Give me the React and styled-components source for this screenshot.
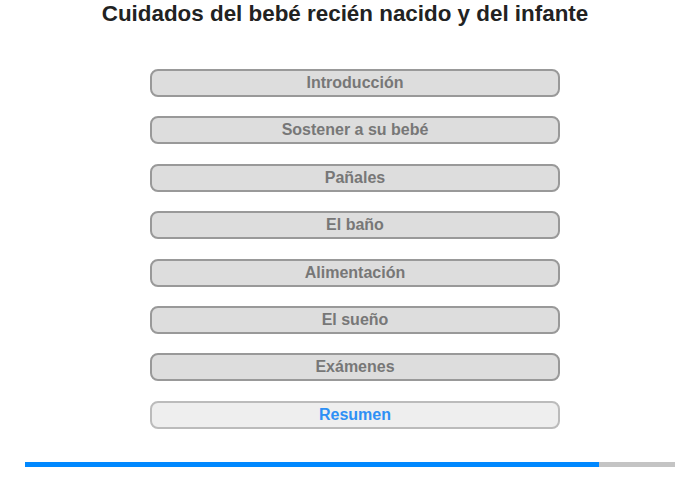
import React from 'react';
import styled, { createGlobalStyle } from 'styled-components';

const GlobalStyle = createGlobalStyle`
  body {
    margin: 0;
    background: #fff;
    font-family: "Liberation Sans", Arial, sans-serif;
  }
`;

const Page = styled.div`
  width: 700px;
  height: 480px;
  display: flex;
  flex-direction: column;
  align-items: center;
`;

const Title = styled.h1`
  margin: 0 10px 0 0;
  padding-top: 1px;
  height: 69px;
  box-sizing: border-box;
  font-size: 22.4px;
  line-height: 26px;
  font-weight: bold;
  color: #222;
  text-align: center;
`;

const Menu = styled.div`
  display: flex;
  flex-direction: column;
  gap: 19.4px;
  width: 410px;
  margin-left: 10px;
`;

const Item = styled.div`
  height: 28px;
  box-sizing: border-box;
  border: 2px solid ${(p) => (p.active ? '#bbb' : '#999')};
  border-radius: 8px;
  background: ${(p) => (p.active ? '#eee' : '#ddd')};
  color: ${(p) => (p.active ? '#2e90f5' : '#777')};
  font-size: 16px;
  font-weight: bold;
  line-height: 24px;
  text-align: center;
  cursor: pointer;
`;

const Progress = styled.div`
  margin-top: 33px;
  width: 650px;
  height: 5px;
  background: #c4c4c4;
`;

const ProgressFill = styled.div`
  height: 100%;
  background: #0088ff;
`;

const sections = [
  'Introducción',
  'Sostener a su bebé',
  'Pañales',
  'El baño',
  'Alimentación',
  'El sueño',
  'Exámenes',
  'Resumen',
];

const App = () => {
  const current = 7;
  return (
    <Page>
      <GlobalStyle />
      <Title>Cuidados del bebé recién nacido y del infante</Title>
      <Menu>
        {sections.map((s, i) => (
          <Item key={s} active={i === current}>
            {s}
          </Item>
        ))}
      </Menu>
      <Progress>
        <ProgressFill style={{ width: `${(574 / 650) * 100}%` }} />
      </Progress>
    </Page>
  );
};

export default App;
